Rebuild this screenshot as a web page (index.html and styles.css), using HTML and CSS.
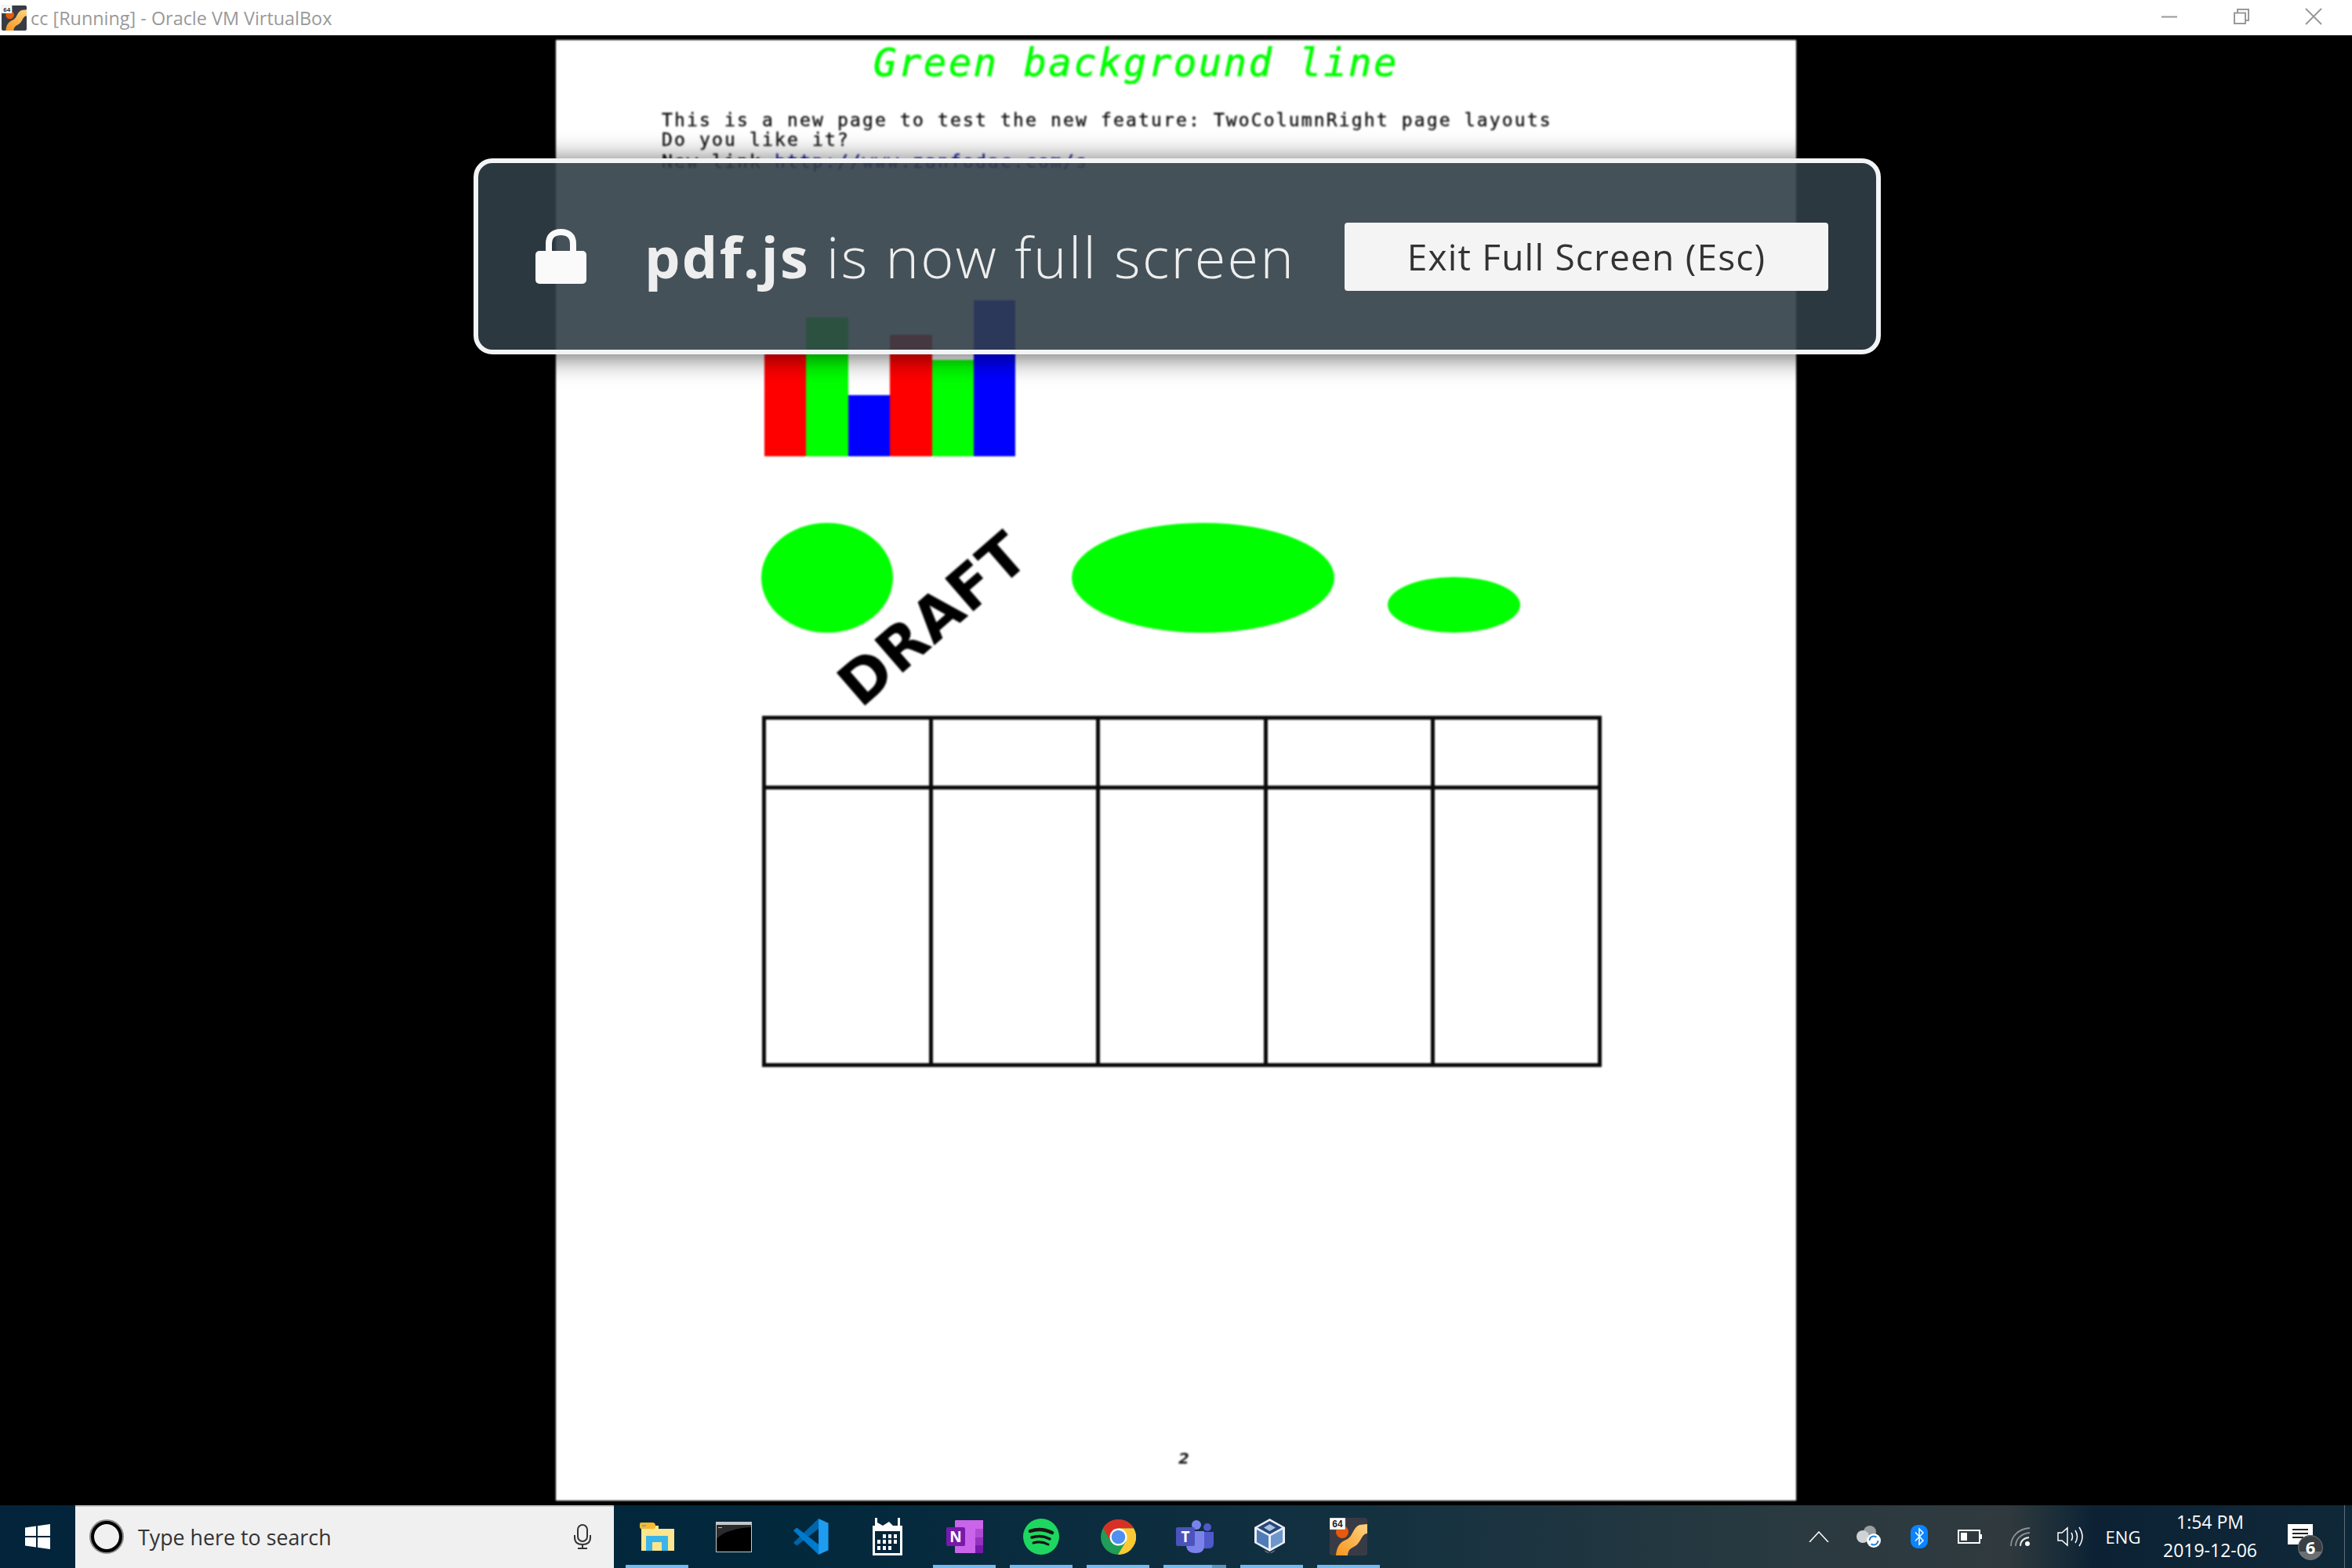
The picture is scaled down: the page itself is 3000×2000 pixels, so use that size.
FILE: index.html
```html
<!DOCTYPE html>
<html lang="en">
<head>
<meta charset="utf-8">
<title>cc [Running] - Oracle VM VirtualBox</title>
<link rel="stylesheet" href="styles.css">
</head>
<body>
<svg class="defs" width="0" height="0" aria-hidden="true">
  <defs>
    <linearGradient id="swoosh" x1="0" y1="1" x2="1" y2="0">
      <stop offset="0" stop-color="#f7941d"/>
      <stop offset="1" stop-color="#ffd27f"/>
    </linearGradient>
    <symbol id="vbox64" viewBox="0 0 48 48">
      <rect width="48" height="48" rx="3" fill="#383b46"/>
      <circle cx="16" cy="18" r="8" fill="#e8590c"/>
      <path d="M8 48C9 37 13 31 21 28C30 24 29 13 38 9L48 8V20C42 20 41 27 36 33C31 39 24 37 23 48Z" fill="url(#swoosh)"/>
      <rect width="20" height="15" fill="#fff" stroke="#777" stroke-width=".5"/>
      <text x="10" y="12" class="badge64">64</text>
    </symbol>
  </defs>
</svg>
<div class="screen">
  <header class="titlebar">
    <svg class="title-icon"><use href="#vbox64"/></svg>
    <span class="title-text">cc [Running] - Oracle VM VirtualBox</span>
    <div class="win-controls">
      <svg class="win-btn" viewBox="0 0 20 20"><path d="M0 10.5H20" class="win-stroke"/></svg>
      <svg class="win-btn" viewBox="0 0 20 20"><path d="M1 5.5H15V19H1ZM5 5V1H19V15H15" class="win-stroke"/></svg>
      <svg class="win-btn" viewBox="0 0 20 20"><path d="M0 0L20 20M20 0L0 20" class="win-stroke"/></svg>
    </div>
  </header>

  <main class="stage">
    <article class="page">
      <h1 class="doc-title">Green background line</h1>
      <div class="doc-text">
        <p class="doc-line">This is a new page to test the new feature: TwoColumnRight page layouts</p>
        <p class="doc-line">Do you like it?</p>
        <p class="doc-line link-line">New link <span class="doc-link">http://www.zanfodac.com/s</span></p>
      </div>
      <div class="bars">
        <div class="bar red" style="height:131px"></div>
        <div class="bar green" style="height:177px"></div>
        <div class="bar blue" style="height:78px"></div>
        <div class="bar red" style="height:155px"></div>
        <div class="bar green" style="height:123px"></div>
        <div class="bar blue" style="height:199px"></div>
      </div>
      <div class="ellipses">
        <div class="ellipse e1"></div>
        <div class="ellipse e2"></div>
        <div class="ellipse e3"></div>
      </div>
      <div class="draft">DRAFT</div>
      <div class="grid-table">
        <div></div><div></div><div></div><div></div><div></div>
        <div></div><div></div><div></div><div></div><div></div>
      </div>
      <div class="page-num">2</div>
    </article>

    <aside class="fs-warning">
      <svg class="lock" viewBox="0 0 71 70">
        <path d="M20 32V19C20 9 26 4 35.500 4S51 9 51 19V32" fill="none" stroke="#fafafa" stroke-width="8"/>
        <rect x="3" y="28" width="65" height="42" rx="5" fill="#fafafa"/>
      </svg>
      <div class="fs-msg"><b>pdf.js</b> is now full screen</div>
      <button class="fs-exit">Exit Full Screen (Esc)</button>
    </aside>
  </main>

  <footer class="taskbar">
    <div class="start">
      <svg class="ico-win" viewBox="0 0 32 32"><path fill="#fff" d="M0 4.500L14 2.600V15H0ZM16 2.300L32 0V15H16ZM0 17H14V29.400L0 27.500ZM16 17H32V32L16 29.700Z"/></svg>
    </div>
    <div class="search">
      <svg class="ico-cortana" viewBox="0 0 44 44"><circle cx="22" cy="22" r="19" fill="none" stroke="#8a8a8a" stroke-width="6"/><circle cx="22" cy="22" r="18" fill="none" stroke="#000" stroke-width="4"/></svg>
      <span class="search-text">Type here to search</span>
      <svg class="ico-mic" viewBox="0 0 22 32"><rect x="5" y="1" width="12" height="21" rx="6" fill="none" stroke="#333" stroke-width="2"/><path d="M1 14V17C1 23 5 26 11 26S21 23 21 17V14M11 26V31M5 31H17" fill="none" stroke="#333" stroke-width="2"/></svg>
    </div>

    <nav class="tasks">
      <div class="tile on">
        <svg class="i-folder" viewBox="0 0 44 36"><path d="M2 4H24V8H44V36H2Z" fill="#fde68f"/><path d="M0 2Q0 0 2 0H16Q20 0 20 4V6Q20 8 16 8H2Q0 8 0 6Z" fill="#f9b92c"/><rect x="3" y="3" width="5" height="2" fill="#4fb6e8"/><path d="M8 17H36V36H28V25H16V36H8Z" fill="#3ab5ea"/></svg>
      </div>
      <div class="tile">
        <svg class="i-cmd" viewBox="0 0 46 39"><rect width="46" height="39" fill="#c4c8cc"/><rect x="1" y="4" width="44" height="34" fill="#000"/><path d="M1 22C10 12 28 8 45 7V4H1Z" fill="#2b2b2b"/><rect x="3" y="7" width="5" height="1" fill="#bbb"/></svg>
      </div>
      <div class="tile">
        <svg class="i-vs" viewBox="0 0 100 100"><path d="M3 66L70 2L74 26L12 74Z" fill="#0065a9"/><path d="M3 34L12 26L74 74L70 98Z" fill="#007acc"/><path d="M70 2L96 14V86L70 98Z" fill="#1f9cf0"/></svg>
      </div>
      <div class="tile">
        <svg class="i-cal" viewBox="0 0 40 48"><path d="M1 10H4V0H7V6L14 10L22 5L27 10H33V0H36V10H39V48H1Z" fill="#fff"/><rect x="4" y="17" width="32" height="28" fill="#04263b"/><path d="M14 21h4v5h-4zM21 21h4v5h-4zM28 21h4v5h-4zM7 28h4v5h-4zM14 28h4v5h-4zM21 28h4v5h-4zM28 28h4v5h-4zM7 36h4v5h-4zM14 36h4v5h-4zM21 36h4v5h-4z" fill="#fff"/></svg>
      </div>
      <div class="tile on">
        <svg class="i-one" viewBox="0 0 47 42"><path d="M11 1Q11 0 12 0H47V42H12Q11 42 11 41Z" fill="#ca64ea"/><rect x="37" y="11" width="10" height="11" fill="#ae4bd5"/><rect x="37" y="22" width="10" height="10" fill="#9332bf"/><rect x="37" y="32" width="10" height="10" fill="#7719aa"/><rect y="9" width="24" height="24" rx="2" fill="#7719aa"/><text x="12" y="28" class="tile-letter">N</text></svg>
      </div>
      <div class="tile on">
        <svg class="i-spot" viewBox="0 0 46 46"><circle cx="23" cy="23" r="23" fill="#1ed760"/><path d="M9 16Q23 11 37 18" fill="none" stroke="#191414" stroke-width="4.500" stroke-linecap="round"/><path d="M11 24Q23 20 34 26" fill="none" stroke="#191414" stroke-width="3.500" stroke-linecap="round"/><path d="M13 31Q23 28 32 33" fill="none" stroke="#191414" stroke-width="3" stroke-linecap="round"/></svg>
      </div>
      <div class="tile on">
        <svg class="i-chrome" viewBox="0 0 45 45"><circle cx="22.500" cy="22.500" r="22.500" fill="#1e9e56"/><path d="M22 45A22.500 22.500 0 0 0 42 11.250H22.500L32.200 28Z" fill="#fcc934"/><path d="M3 11.250A22.500 22.500 0 0 1 42 11.250H22.500L12.700 28Z" fill="#d93025"/><circle cx="22.500" cy="22.500" r="11" fill="#fff"/><circle cx="22.500" cy="22.500" r="8.800" fill="#4f8ff0"/></svg>
      </div>
      <div class="tile on half">
        <svg class="i-teams" viewBox="0 0 48 42"><circle cx="26" cy="6" r="6" fill="#7b83eb"/><circle cx="40" cy="9" r="5" fill="#5059c9"/><path d="M33 15H48V30Q48 36 41 36H33Z" fill="#5059c9"/><path d="M13 14H36V33Q36 42 25 42Q14 42 13 33Z" fill="#7b83eb"/><rect y="9" width="24" height="24" rx="2" fill="#4b53bc"/><text x="12" y="28" class="tile-letter">T</text></svg>
      </div>
      <div class="tile on">
        <svg class="i-vb" viewBox="0 0 39 46"><path d="M19.500 0L39 11V31L19.500 42L0 31V11Z" fill="#e9eef5"/><path d="M19.500 3L35 11.500L19.500 20L4 11.500Z" fill="#27477a"/><path d="M19.500 7L27 11.500L19.500 16L12 11.500Z" fill="#a9c0de"/><path d="M3 14L18 22V38L3 30Z" fill="#4f7cb8"/><path d="M36 14L21 22V38L36 30Z" fill="#6d97cc"/><path d="M12 40Q19.500 48 27 40L19.500 44Z" fill="#9ba6b3"/></svg>
      </div>
      <div class="tile on">
        <svg class="i-app"><use href="#vbox64"/></svg>
      </div>
    </nav>

    <div class="tray">
      <div class="tray-item">
        <svg class="t-caret" viewBox="0 0 26 14"><path d="M1 14L13 1L25 14" fill="none" stroke="#fff" stroke-width="1.500"/></svg>
      </div>
      <div class="tray-item">
        <svg class="t-cloud" viewBox="0 0 32 28"><circle cx="17" cy="8" r="8" fill="#9aa0a4"/><circle cx="8" cy="14" r="8" fill="#d0d3d5"/><circle cx="22" cy="19" r="9" fill="#fff"/><circle cx="22" cy="19" r="5.500" fill="none" stroke="#1a7fd8" stroke-width="2" stroke-dasharray="12 5"/></svg>
      </div>
      <div class="tray-item">
        <svg class="t-bt" viewBox="0 0 22 30"><rect width="22" height="30" rx="9" fill="#0a84ff"/><path d="M6 9.500L16 20L11 25V5L16 10L6 20.500" fill="none" stroke="#fff" stroke-width="1.500"/></svg>
      </div>
      <div class="tray-item">
        <svg class="t-batt" viewBox="0 0 31 18"><rect x="1" y="1" width="27" height="16" fill="none" stroke="#fff" stroke-width="2"/><rect x="4" y="4" width="8" height="10" fill="#fff"/><rect x="29" y="6" width="2" height="6" fill="#fff"/></svg>
      </div>
      <div class="tray-item">
        <svg class="t-wifi" viewBox="0 0 25 24"><path d="M1 24C1 12 10 2 25 1M7 24C7 16 13 8 25 7" fill="none" stroke="#8c9397" stroke-width="1.800"/><path d="M13 24C13 18 17 14 24 13" fill="none" stroke="#e8e8e8" stroke-width="1.800"/><circle cx="22" cy="21" r="3" fill="#fff"/></svg>
      </div>
      <div class="tray-item">
        <svg class="t-vol" viewBox="0 0 33 28"><path d="M1 9H6L13 3V25L6 19H1Z" fill="none" stroke="#fff" stroke-width="1.500"/><path d="M18 9Q21 14 18 19M23 6Q28 14 23 22M28 2Q36 14 28 26" fill="none" stroke="#fff" stroke-width="1.500"/></svg>
      </div>
      <div class="tray-lang">ENG</div>
      <div class="clock"><span>1:54 PM</span><span>2019-12-06</span></div>
      <div class="notif">
        <svg class="t-note" viewBox="0 0 47 47"><path d="M0 0H32V26H0Z" fill="#fff"/><path d="M6 7H26M6 12H26M6 17H20" stroke="#222" stroke-width="2"/><circle cx="29" cy="30" r="16" fill="#3a3f43"/><path d="M14 35A16 16 0 0 0 44 35Z" fill="#6a6f72"/><circle cx="29" cy="30" r="15.500" fill="none" stroke="#6c7275"/><text x="29" y="38" class="badge-num">6</text></svg>
      </div>
      <div class="show-desktop"></div>
    </div>
  </footer>
</div>
</body>
</html>
```
FILE: styles.css
```css
* { box-sizing: border-box; }
html, body { margin: 0; padding: 0; background: #000; }
.defs { position: absolute; }
.screen { width: 3000px; height: 2000px; display: flex; flex-direction: column; overflow: hidden; }

/* title bar */
.titlebar { height: 45px; flex: none; background: #fff; display: flex; align-items: center; padding-left: 2px; }
.title-icon { width: 32px; height: 32px; margin-right: 5px; }
.title-text { font: 400 23.4px "Open Sans", sans-serif; color: #999; white-space: nowrap; }
.win-controls { margin-left: auto; display: flex; gap: 72px; margin-right: 39px; margin-top: -3px; }
.win-btn { width: 20px; height: 20px; overflow: visible; }
.win-stroke { fill: none; stroke: #999; stroke-width: 2; }

/* stage */
.stage { position: relative; flex: 1; background: #000; display: flex; align-items: center; justify-content: center; }
.page { position: relative; width: 1582px; height: 1863px; background: #fff; display: flex; flex-direction: column; filter: blur(1.1px); }
.doc-title { margin: 0 0 0 405px; font: italic 400 49px/60px "DejaVu Sans Mono", monospace; letter-spacing: 2.4px; color: #0f0; white-space: nowrap; -webkit-text-stroke: .6px #0f0; }
.doc-text { margin: 30px 0 0 135px; font: 400 23px/25px "DejaVu Sans Mono", monospace; letter-spacing: 2.15px; color: #111; white-space: nowrap; -webkit-text-stroke: .4px #111; }
.doc-line { margin: 0; }
.link-line { margin-top: 3px; }
.doc-link { color: #1a1aa8; -webkit-text-stroke-color: #1a1aa8; }

.bars { display: flex; align-items: flex-end; height: 199px; margin: 164px 0 0 266px; }
.bar { width: 53.4px; }
.red { background: #f00; }
.green { background: #0f0; }
.blue { background: #00f; }

.ellipses { display: flex; align-items: flex-end; margin: 85px 0 0 262px; height: 140px; }
.ellipse { border-radius: 50%; background: #0f0; }
.e1 { width: 168px; height: 140px; }
.e2 { width: 335px; height: 140px; margin-left: 228px; }
.e3 { width: 169px; height: 71px; margin-left: 68px; }

.draft { position: absolute; left: 481px; top: 739px; transform-origin: center; transform: translate(-50%, -50%) rotate(-41deg); font: 700 76px/1 "DejaVu Sans", sans-serif; letter-spacing: 1px; color: #000; }

.grid-table { display: grid; grid-template-columns: repeat(5, 1fr); grid-template-rows: 84px 1fr; gap: 5px; padding: 5px; width: 1071px; height: 448px; margin: 106px 0 0 263px; background: #0a0a0a; }
.grid-table div { background: #fff; }

.page-num { margin: 487px 0 0 794px; font: italic 700 20px/24px "DejaVu Sans", sans-serif; color: #222; }

/* full screen warning */
.fs-warning { position: absolute; left: 604px; top: 157px; width: 1795px; height: 250px; display: flex; align-items: center; border: 6px solid #f2f4f5; border-radius: 24px; background: rgba(49, 62, 71, .9); box-shadow: 0 3px 34px rgba(0, 0, 0, .62); padding: 0 61px 0 70px; filter: blur(.6px); }
.lock { width: 71px; height: 70px; flex: none; }
.fs-msg { margin-left: 71px; font: 300 72px/1 "Open Sans", sans-serif; letter-spacing: 2.3px; color: #eee; white-space: nowrap; }
.fs-msg b { font-weight: 700; }
.fs-exit { margin-left: auto; width: 617px; height: 87px; border: 0; border-radius: 4px; background: #f4f4f4; font: 400 46px/1 "Open Sans", sans-serif; letter-spacing: 1.2px; color: #333; padding: 0; }

/* taskbar */
.taskbar { height: 80px; flex: none; display: flex; background: linear-gradient(90deg, #03243b 0, #02283c 1000px, #123040 1700px, #2a3a40 2300px, #303a3e 2560px, #1c2e39 2620px, #0c2234 2670px, #0f2838 3000px); }
.start { width: 96px; display: flex; align-items: center; justify-content: center; }
.ico-win { width: 32px; height: 32px; }
.search { width: 687px; display: flex; align-items: center; background: #f0f0f0; border-top: 2px solid #c9c9c9; padding: 0 29px 2px 18px; }
.ico-cortana { width: 44px; height: 44px; flex: none; }
.search-text { margin-left: 18px; font: 400 26.8px "Open Sans", sans-serif; color: #333; white-space: nowrap; }
.ico-mic { width: 22px; height: 32px; margin-left: auto; }

.tasks { display: flex; margin-left: 6px; }
.tile { position: relative; width: 98px; display: flex; align-items: center; justify-content: center; }
.tile.on::after { content: ""; position: absolute; left: 9px; right: 9px; bottom: 0; height: 4px; background: #76b9ed; }
.tile.half::before { content: ""; position: absolute; right: 9px; width: 18px; bottom: 0; height: 4px; background: #5b93bd; z-index: 1; }
.tile svg { display: block; }
.i-folder { width: 44px; height: 36px; }
.i-cmd { width: 46px; height: 39px; }
.i-vs { width: 49px; height: 48px; }
.i-cal { width: 40px; height: 48px; }
.i-one { width: 47px; height: 42px; }
.i-spot { width: 46px; height: 46px; }
.i-chrome { width: 45px; height: 45px; }
.i-teams { width: 48px; height: 42px; }
.i-vb { width: 39px; height: 46px; margin-right: 6px; }
.i-app { width: 48px; height: 48px; }
.tile-letter { font: 700 19px "Open Sans", sans-serif; fill: #fff; text-anchor: middle; }
.badge64 { font: 700 12px "Liberation Sans", sans-serif; fill: #222; text-anchor: middle; }

.tray { margin-left: auto; display: flex; align-items: center; height: 100%; }
.tray-item { width: 64px; display: flex; justify-content: center; }
.t-caret { width: 26px; height: 14px; }
.t-cloud { width: 32px; height: 28px; }
.t-bt { width: 22px; height: 30px; }
.t-batt { width: 31px; height: 18px; }
.t-wifi { width: 25px; height: 24px; }
.t-vol { width: 33px; height: 28px; }
.tray-lang { width: 72px; text-align: center; font: 400 22px "Open Sans", sans-serif; color: #fff; }
.clock { width: 150px; display: flex; flex-direction: column; align-items: center; gap: 12px; margin-top: -2px; font: 400 23px/24px "Open Sans", sans-serif; color: #fff; }
.notif { width: 96px; height: 100%; padding: 24px 0 0 24px; display: flex; align-items: flex-start; }
.t-note { width: 47px; height: 47px; }
.badge-num { font: 700 22px "Open Sans", sans-serif; fill: #fff; text-anchor: middle; }
.show-desktop { width: 10px; height: 100%; border-left: 1px solid #5b6b75; }
```
